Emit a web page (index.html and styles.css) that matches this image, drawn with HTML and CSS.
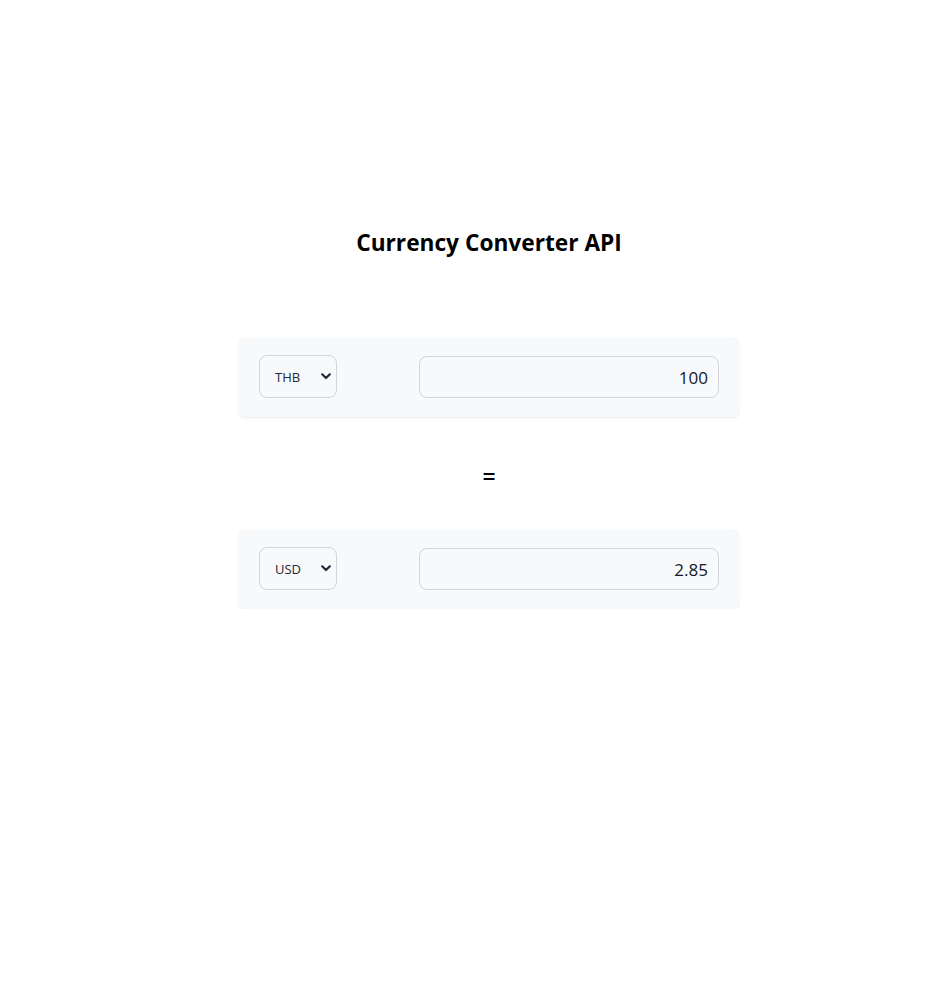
FILE: index.html
```html
<!DOCTYPE html>
<html lang="en">
<head>
<meta charset="utf-8">
<title>Currency Converter API</title>
<link rel="stylesheet" href="styles.css">
</head>
<body>
<main class="page">
  <h1 class="title">Currency Converter API</h1>
  <div class="card">
    <div class="select-wrap">
      <select class="select">
        <option>THB</option>
        <option>USD</option>
      </select>
      <svg class="chev" width="10" height="7" viewBox="0 0 10 7"><path d="M1.2 1.3 L5 5 L8.8 1.3" fill="none" stroke="#1f2937" stroke-width="2.2" stroke-linecap="round" stroke-linejoin="round"/></svg>
    </div>
    <input class="amount" type="text" value="100">
  </div>
  <div class="equals">=</div>
  <div class="card">
    <div class="select-wrap">
      <select class="select">
        <option>USD</option>
        <option>THB</option>
      </select>
      <svg class="chev" width="10" height="7" viewBox="0 0 10 7"><path d="M1.2 1.3 L5 5 L8.8 1.3" fill="none" stroke="#1f2937" stroke-width="2.2" stroke-linecap="round" stroke-linejoin="round"/></svg>
    </div>
    <input class="amount" type="text" value="2.85">
  </div>
</main>
</body>
</html>
```
FILE: styles.css
```css
html, body {
  margin: 0;
  padding: 0;
  background: #ffffff;
}
body {
  font-family: "Open Sans", "Noto Sans", "Liberation Sans", sans-serif;
  color: #000;
}
.page {
  display: flex;
  flex-direction: column;
  align-items: center;
  padding: 226px 0 0 43px;
}
.title {
  margin: 0;
  font-size: 22.7px;
  line-height: 34px;
  font-weight: 700;
  letter-spacing: 0;
}
.card {
  box-sizing: border-box;
  width: 500px;
  height: 80px;
  margin-top: 77px;
  padding: 0 20px;
  background: #f8f9fb;
  border-radius: 6px;
  box-shadow: 0 1px 2px rgba(0,0,0,0.08);
  display: flex;
  align-items: center;
  justify-content: space-between;
}
.equals + .card { margin-top: 38px; }
.select-wrap {
  position: relative;
  width: 78px;
  height: 43px;
  margin-top: -1px;
}
.select {
  box-sizing: border-box;
  appearance: none;
  -webkit-appearance: none;
  width: 100%;
  height: 100%;
  margin: 0;
  padding: 0 0 0 15px;
  border: 1px solid #d1d5db;
  border-radius: 8px;
  background: transparent;
  font-family: "Open Sans", "Noto Sans", sans-serif;
  font-size: 13px;
  color: #1f2937;
  outline: none;
}
.chev {
  position: absolute;
  right: 6px;
  top: 18px;
  pointer-events: none;
}
.amount {
  box-sizing: border-box;
  width: 300px;
  height: 42px;
  margin: 0;
  padding: 0 10px;
  border: 1px solid #d1d5db;
  border-radius: 8px;
  background: #f8f9fb;
  text-align: right;
  font-family: "Open Sans", "Noto Sans", sans-serif;
  font-size: 17px;
  color: #111827;
  outline: none;
}
.equals {
  margin-top: 44px;
  font-size: 23px;
  line-height: 30px;
  font-weight: 600;
  font-family: "Open Sans", "Noto Sans", sans-serif;
}
```
